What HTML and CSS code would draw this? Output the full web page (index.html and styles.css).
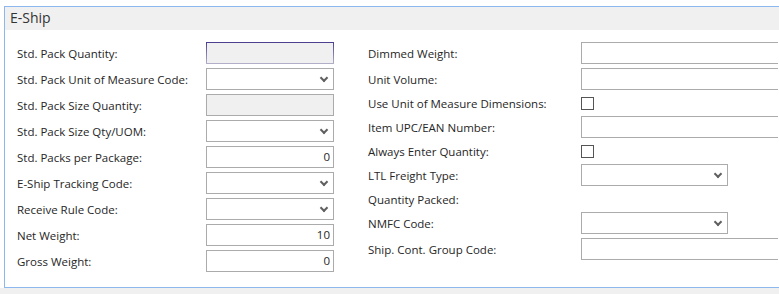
FILE: index.html
```html
<!DOCTYPE html>
<html lang="en">
<head>
  <meta charset="UTF-8" />
  <title>E-Ship</title>
  <link rel="stylesheet" href="styles.css">
</head>
<body>
  <div class="panel">
    <div class="panel-title">E-Ship</div>
    <div class="panel-body">
      <div class="col col-left">
        <div class="row"><span class="label">Std. Pack Quantity:</span><div class="field disabled focused"></div></div>
        <div class="row"><span class="label">Std. Pack Unit of Measure Code:</span><div class="field select"></div></div>
        <div class="row"><span class="label">Std. Pack Size Quantity:</span><div class="field disabled"></div></div>
        <div class="row"><span class="label">Std. Pack Size Qty/UOM:</span><div class="field select"></div></div>
        <div class="row"><span class="label">Std. Packs per Package:</span><div class="field num">0</div></div>
        <div class="row"><span class="label">E-Ship Tracking Code:</span><div class="field select"></div></div>
        <div class="row"><span class="label">Receive Rule Code:</span><div class="field select"></div></div>
        <div class="row"><span class="label">Net Weight:</span><div class="field num">10</div></div>
        <div class="row"><span class="label">Gross Weight:</span><div class="field num">0</div></div>
      </div>
      <div class="col col-right">
        <div class="row"><span class="label">Dimmed Weight:</span><div class="field wide"></div></div>
        <div class="row"><span class="label">Unit Volume:</span><div class="field wide"></div></div>
        <div class="row short"><span class="label">Use Unit of Measure Dimensions:</span><div class="check"></div></div>
        <div class="row"><span class="label">Item UPC/EAN Number:</span><div class="field wide"></div></div>
        <div class="row short"><span class="label">Always Enter Quantity:</span><div class="check"></div></div>
        <div class="row"><span class="label">LTL Freight Type:</span><div class="field select medium"></div></div>
        <div class="row short"><span class="label">Quantity Packed:</span></div>
        <div class="row"><span class="label">NMFC Code:</span><div class="field select medium"></div></div>
        <div class="row"><span class="label">Ship. Cont. Group Code:</span><div class="field wide"></div></div>
      </div>
    </div>
  </div>
  <div class="footer"></div>
</body>
</html>
```

FILE: styles.css
```css
html, body {
  margin: 0;
  overflow: hidden;
}

body {
  font-family: "Open Sans", "Noto Sans", sans-serif;
  font-size: 11.5px;
  color: #262626;
  background: white;
  width: 779px;
  height: 294px;
}

.panel {
  margin: 6px 0 0 4px;
  width: 774px;
  overflow: hidden;
  border: 1px solid #8db7ef;
  border-right: none;
}

.panel-title {
  height: 23px;
  line-height: 22px;
  background: #f0f0f0;
  padding-left: 5px;
  font-size: 14px;
  color: #333;
}

.panel-body {
  display: flex;
  gap: 35px;
  padding: 10px 0 13px 12px;
}

.col-left {
  flex: none;
  width: 316px;
}

.col-right {
  flex: none;
  width: 411px;
}

.col-left .row {
  grid-template-columns: 189px 128px;
}

.col-right .row {
  grid-template-columns: 213px auto;
}

.row {
  display: grid;
  align-items: center;
  height: 26px;
}

.row.short {
  height: 22px;
}

.label {
  white-space: nowrap;
}

.field {
  position: relative;
  height: 20px;
  line-height: 20px;
  border: 1px solid #ababab;
  background: white;
  box-sizing: content-box;
}

.field.wide {
  width: 196px;
  border-right: none;
}

.field.medium {
  width: 145px;
  border-right: 1px solid #ababab;
}

.field.disabled {
  background: #f0f0f0;
}

.field.focused {
  border-image: linear-gradient(#4a3d8f, #b4b1c9) 1;
}

.field.num {
  text-align: right;
  padding-right: 3px;
}

.field.select::after {
  content: "";
  position: absolute;
  right: 6px;
  top: 6px;
  width: 4px;
  height: 4px;
  border-right: 2px solid #606060;
  border-bottom: 2px solid #606060;
  transform: rotate(45deg);
}

.check {
  width: 11px;
  height: 11px;
  border: 1px solid #555;
  background: white;
}

.footer {
  height: 20px;
  background: #f0f0f0;
}
```
